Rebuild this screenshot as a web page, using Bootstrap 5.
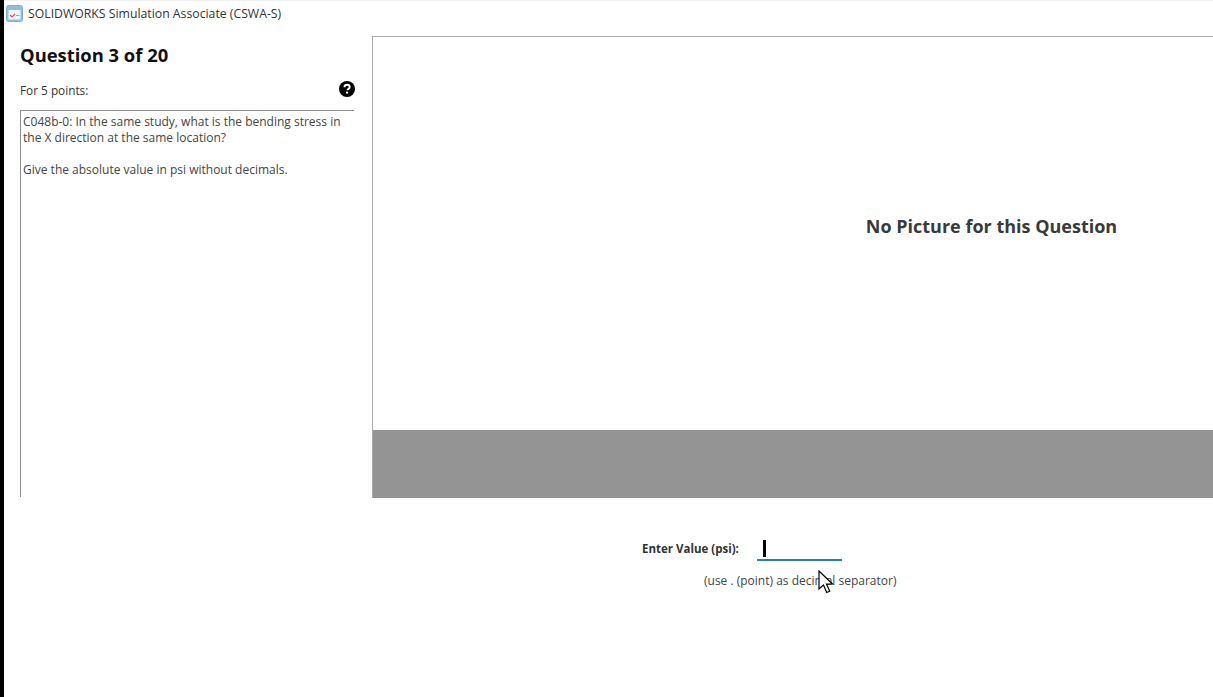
<!DOCTYPE html>
<html lang="en">
<head>
<meta charset="UTF-8">
<meta name="viewport" content="width=device-width, initial-scale=1.0">
<title>SOLIDWORKS Simulation Associate (CSWA-S)</title>
<link href="https://cdn.jsdelivr.net/npm/bootstrap@5.3.0/dist/css/bootstrap.min.css" rel="stylesheet">
<style>
html, body { height: 100%; overflow: hidden; }
body { font-family: "Open Sans", "Liberation Sans", sans-serif; background: #fff; color: #222; }
.app-window { height: 697px; width: 1213px; border-left: 4px solid #000; overflow: hidden; position: relative; }
.title-strip { height: 36px; padding: 4px 0 0 2px; font-size: 12.25px; line-height: 18px; color: #333; border-top: 1px solid #f2f2f2; gap: 5px; }
.work-area { height: 462px; }
.left-pane { width: 368px; flex: none; padding: 0 18px 1px 16px; }
.q-heading { font-size: 18.4px; font-weight: 700; line-height: 24px; margin: 7px 0 0; color: #111; }
.points-row { height: 20px; margin-top: 12px; margin-right: -1px; font-size: 11.8px; line-height: 20px; color: #333; }
.points-row span { margin-top: 2px; }
.stem-box { flex: 1; margin-top: 11px; border-top: 1px solid #8b8f8f; border-left: 1px solid #8b8f8f; padding: 3px 2px 2px; font-size: 12px; line-height: 16px; color: #444; white-space: pre-line; }
.pic-pane { width: 1238px; flex: none; border-left: 1px solid #a9adad; border-top: 1px solid #a9adad; }
.pic-blank { flex: 1; padding-top: 177px; text-align: center; font-size: 18px; font-weight: 700; line-height: 24px; color: #3a3a3a; }
.pic-bar { height: 68px; background: #949494; }
.answer-area { padding: 41px 0 0 638px; }
.value-label { width: 115px; font-size: 11.5px; font-weight: 700; line-height: 20px; color: #333; }
.value-input { width: 85px; height: 22px; border-bottom: 2px solid #1b7fd4; padding: 1px 0 0 6px; }
.caret-bar { display: block; width: 3px; height: 17px; background: #000; }
.unit-note { margin: 11px 0 0 62px; font-size: 12px; line-height: 18px; color: #444; }
.mouse-arrow { position: absolute; left: 814px; top: 570px; }
</style>
</head>
<body>
<div class="app-window">
  <div class="title-strip d-flex align-items-start">
    <svg width="17" height="17" viewBox="0 0 17 17">
      <rect x="0.5" y="0.5" width="16" height="16" rx="2" fill="#8fbfe0" stroke="#7fb0d2"/>
      <rect x="2.5" y="5" width="12" height="9.5" fill="#f3f5f8"/>
      <path d="M4 10l2 2 3-3" fill="none" stroke="#d9534f" stroke-width="1.2"/>
      <path d="M10 10.5h3.5" stroke="#9aa7b2"/>
    </svg>
    <span>SOLIDWORKS Simulation Associate (CSWA-S)</span>
  </div>

  <div class="work-area d-flex">
    <div class="left-pane d-flex flex-column">
      <h1 class="q-heading">Question 3 of 20</h1>
      <div class="points-row d-flex justify-content-between align-items-center">
        <span>For 5 points:</span>
        <svg width="16" height="16" viewBox="0 0 16 16">
          <circle cx="8" cy="8" r="8" fill="#000"/>
          <path d="M5.4 6.2C5.5 4.6 6.6 3.7 8.1 3.7c1.5 0 2.6.9 2.6 2.2 0 1-.6 1.5-1.3 2-.6.4-.8.7-.8 1.4" fill="none" stroke="#fff" stroke-width="1.9"/>
          <rect x="7.1" y="10.6" width="2" height="2" fill="#fff"/>
        </svg>
      </div>
      <div class="stem-box">C048b-0: In the same study, what is the bending stress in the X direction at the same location?

Give the absolute value in psi without decimals.</div>
    </div>
    <div class="pic-pane d-flex flex-column">
      <div class="pic-blank">No Picture for this Question</div>
      <div class="pic-bar"></div>
    </div>
  </div>

  <div class="answer-area">
    <div class="d-flex align-items-start">
      <span class="value-label">Enter Value (psi):</span>
      <div class="value-input"><span class="caret-bar"></span></div>
    </div>
    <div class="unit-note">(use . (point) as decimal separator)</div>
  </div>

  <svg class="mouse-arrow" width="17" height="25" viewBox="0 0 17 25">
    <path d="M1 1v18l4.5-4 3.2 7.5 3-1.3-3.2-7.2h6z" fill="#fff" stroke="#000" stroke-width="1.2"/>
  </svg>
</div>
<script src="https://cdn.jsdelivr.net/npm/bootstrap@5.3.0/dist/js/bootstrap.bundle.min.js"></script>
</body>
</html>
